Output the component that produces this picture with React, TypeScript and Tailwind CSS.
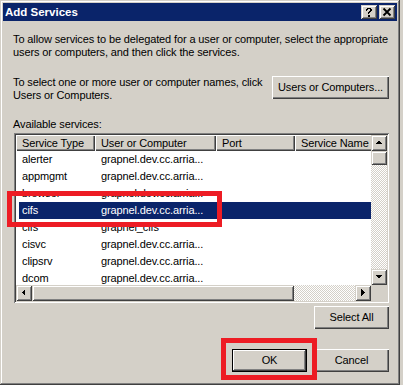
import type { ReactNode } from "react";

const RAISED =
  "shadow-[inset_1px_1px_#ffffff,inset_-1px_-1px_#404040,inset_-2px_-2px_#808080]";
const SCROLL_BTN =
  "shadow-[inset_1px_1px_#d4d0c8,inset_-1px_-1px_#404040,inset_2px_2px_#ffffff,inset_-2px_-2px_#808080]";
const CHECKER =
  "bg-[repeating-conic-gradient(#d4d0c8_0_25%,#ffffff_0_50%)] bg-[length:2px_2px]";

const rows = [
  { type: "alerter", host: "grapnel.dev.cc.arria..." },
  { type: "appmgmt", host: "grapnel.dev.cc.arria..." },
  { type: "browser", host: "grapnel.dev.cc.arria..." },
  { type: "cifs", host: "grapnel.dev.cc.arria...", selected: true },
  { type: "cifs", host: "grapnel_cifs" },
  { type: "cisvc", host: "grapnel.dev.cc.arria..." },
  { type: "clipsrv", host: "grapnel.dev.cc.arria..." },
  { type: "dcom", host: "grapnel.dev.cc.arria..." },
];

function Arrow({ dir }: { dir: "up" | "down" | "left" | "right" }) {
  const points = {
    up: "4,9 11,9 7.5,5.5",
    down: "4,6 11,6 7.5,9.5",
    left: "9,4 9,11 5.5,7.5",
    right: "6,4 6,11 9.5,7.5",
  }[dir];
  return (
    <svg width="16" height="16" viewBox="0 0 16 16" shapeRendering="crispEdges">
      <polygon points={points} fill="#000" />
    </svg>
  );
}

function ScrollButton({ dir }: { dir: "up" | "down" | "left" | "right" }) {
  return (
    <div className={`h-[16px] w-[16px] shrink-0 bg-[#d4d0c8] ${SCROLL_BTN}`}>
      <Arrow dir={dir} />
    </div>
  );
}

function Button({
  children,
  width = "w-[75px]",
  isDefault = false,
}: {
  children: ReactNode;
  width?: string;
  isDefault?: boolean;
}) {
  return (
    <div
      className={`flex h-[23px] ${width} shrink-0 items-center justify-center bg-[#d4d0c8] ${
        isDefault
          ? "shadow-[inset_0_0_0_1px_#000000,inset_-2px_-2px_#404040,inset_2px_2px_#ffffff,inset_-3px_-3px_#808080]"
          : RAISED
      }`}
    >
      {children}
    </div>
  );
}

function HeaderCell({ children, width }: { children: ReactNode; width: string }) {
  return (
    <div
      className={`flex h-[16px] ${width} shrink-0 items-center overflow-hidden whitespace-nowrap pl-[6px] ${RAISED}`}
    >
      {children}
    </div>
  );
}

function ServiceList() {
  return (
    <div className="ml-[1px] h-[170px] w-[375px] bg-white p-[2px] shadow-[inset_1px_1px_#808080,inset_-1px_-1px_#ffffff,inset_2px_2px_#404040,inset_-2px_-2px_#d4d0c8]">
      <div className="grid h-full grid-cols-[1fr_16px] grid-rows-[1fr_16px]">
        <div className="flex flex-col overflow-hidden">
          <div className="flex bg-[#d4d0c8]">
            <HeaderCell width="w-[79px]">Service Type</HeaderCell>
            <HeaderCell width="w-[121px]">User or Computer</HeaderCell>
            <HeaderCell width="w-[79px]">Port</HeaderCell>
            <HeaderCell width="w-[80px]">Service Name</HeaderCell>
          </div>
          {rows.map((row, i) => (
            <div key={i} className="flex h-[17px] shrink-0 pl-[3px]">
              <div
                className={`flex flex-1 items-center whitespace-nowrap ${
                  row.selected ? "bg-[#0a246a] text-white" : ""
                }`}
              >
                <div className="w-[76px] pl-[3px]">{row.type}</div>
                <div className="pl-[6px]">{row.host}</div>
              </div>
            </div>
          ))}
        </div>
        <div className="flex flex-col">
          <ScrollButton dir="up" />
          <div className={`h-[14px] w-[16px] bg-[#d4d0c8] ${SCROLL_BTN}`} />
          <div className={`flex-1 ${CHECKER}`} />
          <ScrollButton dir="down" />
        </div>
        <div className="flex">
          <ScrollButton dir="left" />
          <div className={`h-[16px] w-[262px] bg-[#d4d0c8] ${SCROLL_BTN}`} />
          <div className={`flex-1 ${CHECKER}`} />
          <ScrollButton dir="right" />
        </div>
        <div className="bg-[#d4d0c8]" />
      </div>
    </div>
  );
}

export default function App() {
  return (
    <div className="h-[385px] w-[403px] bg-[#d4d0c8] font-['Liberation_Sans',Arial,sans-serif] text-[11px] leading-[13px] tracking-[-0.12px] text-black">
      <div className="relative flex h-[385px] w-[400px] flex-col p-[3px] shadow-[inset_-1px_-1px_#404040,inset_1px_1px_#d4d0c8,inset_-2px_-2px_#808080,inset_2px_2px_#ffffff]">
        {/* title bar */}
        <div className="flex h-[18px] items-center bg-[#0a246a] pl-[2px] pr-[2px]">
          <span className="flex-1 text-[11.5px] font-bold tracking-normal text-white">
            Add Services
          </span>
          <div className={`h-[14px] w-[16px] bg-[#d4d0c8] ${SCROLL_BTN}`}>
            <svg width="16" height="14" viewBox="0 0 16 14" shapeRendering="crispEdges">
              <path
                d="M5 5V4h1V3h4v1h1v2h-1v1H9v1H8v1H7V7h1V6h1V4H7v1H6v1H5z M7 10h2v2H7z"
                fill="#000"
              />
            </svg>
          </div>
          <div className={`ml-[2px] h-[14px] w-[16px] bg-[#d4d0c8] ${SCROLL_BTN}`}>
            <svg width="16" height="14" viewBox="0 0 16 14">
              <path d="M4.5 3.5l7 7M11.5 3.5l-7 7" stroke="#000" strokeWidth="1.8" />
            </svg>
          </div>
        </div>

        {/* body */}
        <div className="flex flex-1 flex-col pl-[10px] pr-[8px]">
          <p className="mt-[12px] whitespace-nowrap">
            To allow services to be delegated for a user or computer, select the appropriate
            <br />
            users or computers, and then click the services.
          </p>

          <div className="mt-[17px] flex items-start justify-between">
            <p className="whitespace-nowrap">
              To select one or more user or computer names, click
              <br />
              Users or Computers.
            </p>
            <Button width="w-[117px]">Users or Computers...</Button>
          </div>

          <p className="mt-[16px]">Available services:</p>

          <div className="mt-[2px]">
            <ServiceList />
          </div>

          <div className="mt-[3px] flex justify-end">
            <Button>Select All</Button>
          </div>

          <div className="mt-[20px] flex justify-end gap-[7px]">
            <Button isDefault>OK</Button>
            <Button>Cancel</Button>
          </div>
        </div>

        {/* annotation boxes */}
        <div className="absolute left-[7px] top-[191px] h-[36px] w-[215px] border-[5px] border-[#ed1c24]" />
        <div className="absolute left-[221px] top-[338px] h-[42px] w-[96px] border-[5px] border-[#ed1c24]" />
      </div>
    </div>
  );
}
